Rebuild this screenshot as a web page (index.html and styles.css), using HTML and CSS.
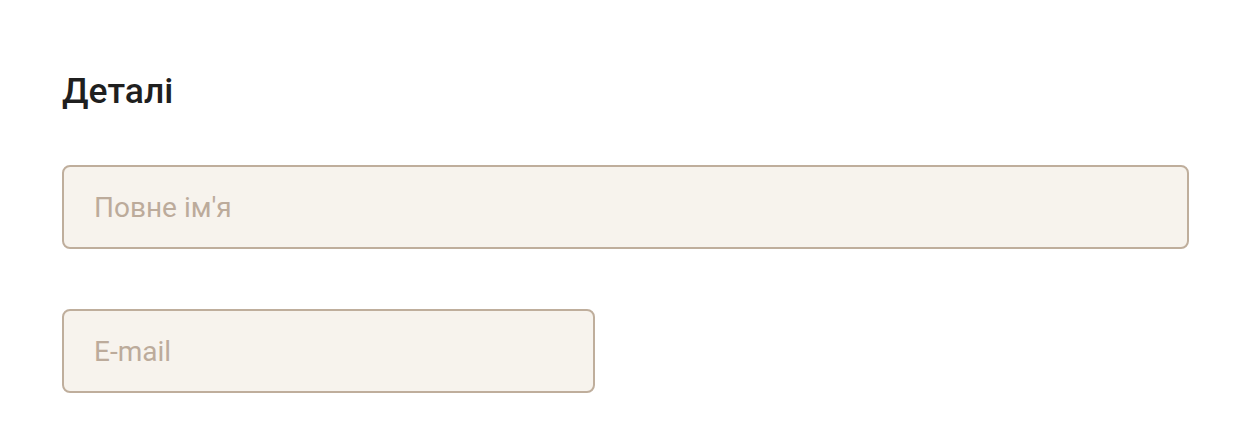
FILE: index.html
```html
<!DOCTYPE html>
<html lang="uk">
<head>
<meta charset="utf-8">
<link rel="stylesheet" href="styles.css">
</head>
<body>
<section class="details">
  <h2 class="details-title">Деталі</h2>
  <form class="details-form">
    <input class="field field-full" type="text" placeholder="Повне ім'я">
    <input class="field field-half" type="email" placeholder="E-mail">
  </form>
</section>
</body>
</html>
```
FILE: styles.css
```css
html, body {
  margin: 0;
  padding: 0;
  background: #ffffff;
}
body {
  font-family: Roboto, "Liberation Sans", Arial, sans-serif;
}
.details {
  padding: 69px 54px 0 62px;
}
.details-title {
  margin: 0;
  font-size: 35.5px;
  font-weight: 500;
  line-height: 44px;
  color: #1f1f1f;
}
.details-form {
  display: flex;
  flex-direction: column;
  align-items: flex-start;
  gap: 60px;
  margin-top: 52px;
}
.field {
  box-sizing: border-box;
  height: 84px;
  padding: 0 30px;
  border: 2px solid #bfae9c;
  border-radius: 8px;
  background: #f7f3ed;
  font-family: Roboto, "Liberation Sans", Arial, sans-serif;
  font-size: 28px;
  color: #333;
  outline: none;
}
.field::placeholder {
  color: #bcab9b;
  opacity: 1;
}
.field-full {
  width: 100%;
}
.field-half {
  width: 533px;
}
```
